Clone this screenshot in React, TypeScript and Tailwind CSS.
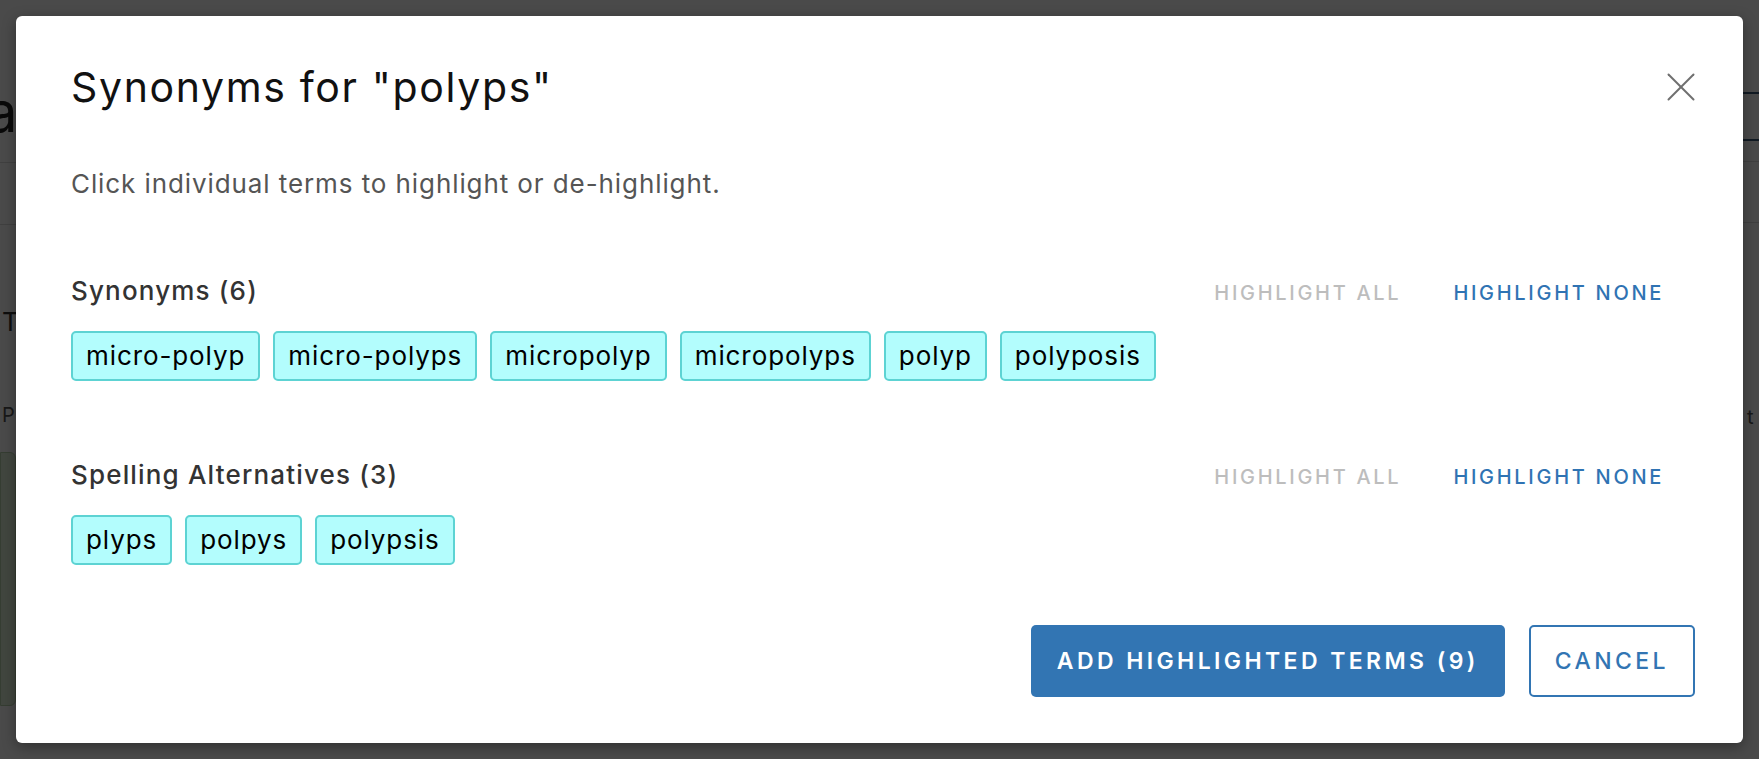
import { useState } from "react";

const groups = [
  {
    label: "Synonyms",
    terms: ["micro-polyp", "micro-polyps", "micropolyp", "micropolyps", "polyp", "polyposis"],
  },
  {
    label: "Spelling Alternatives",
    terms: ["plyps", "polpys", "polypsis"],
  },
];

function CloseIcon() {
  return (
    <svg width="28" height="28" viewBox="0 0 28 28" fill="none" stroke="#6f6f6f" strokeWidth="2" strokeLinecap="round">
      <path d="M1.5 1.5L26.5 26.5" />
      <path d="M26.5 1.5L1.5 26.5" />
    </svg>
  );
}

function TermChip({ term, on, onToggle }: { term: string; on: boolean; onToggle: () => void }) {
  return (
    <button
      type="button"
      onClick={onToggle}
      className={`flex h-[50px] items-center rounded-[5px] border-2 px-[13px] text-[26px] leading-none tracking-[0.035em] text-black ${
        on ? "border-[#5dd3d3] bg-[#b3fdfd]" : "border-[#d6d6d6] bg-white"
      }`}
    >
      {term}
    </button>
  );
}

function TermGroup({
  label,
  terms,
  selected,
  setAll,
  toggle,
}: {
  label: string;
  terms: string[];
  selected: Set<string>;
  setAll: (terms: string[], on: boolean) => void;
  toggle: (t: string) => void;
}) {
  return (
    <section>
      <div className="flex items-baseline justify-between">
        <h3 className="text-[26px] leading-[32px] font-medium tracking-[0.045em] text-[#333]">
          {label} ({terms.length})
        </h3>
        <div className="flex items-baseline gap-[52px] pr-[31px]">
          <button
            type="button"
            onClick={() => setAll(terms, true)}
            className="text-[20px] font-medium tracking-[0.135em] text-[#bdbdbd]"
          >
            HIGHLIGHT ALL
          </button>
          <button
            type="button"
            onClick={() => setAll(terms, false)}
            className="text-[20px] font-medium tracking-[0.135em] text-[#2f73b3]"
          >
            HIGHLIGHT NONE
          </button>
        </div>
      </div>
      <div className="mt-[23px] flex flex-wrap gap-[13px]">
        {terms.map((t) => (
          <TermChip key={t} term={t} on={selected.has(t)} onToggle={() => toggle(t)} />
        ))}
      </div>
    </section>
  );
}

// faint page behind the overlay, only its edges show
function BackPage() {
  return (
    <div className="flex h-full w-full bg-white">
      <div className="flex w-[16px] flex-col overflow-hidden">
        <div className="mt-[84px] -ml-[14px] text-[56px] leading-none text-[#222]">a</div>
        <div className="mt-[22px] border-t border-[#ddd]" />
        <div className="mt-[61px] border-t border-[#ddd]" />
        <div className="mt-[84px] pl-[2px] text-[26px] leading-none text-[#333]">T</div>
        <div className="mt-[70px] pl-[2px] text-[20px] leading-none text-[#555]">P</div>
        <div className="mt-[27px] h-[254px] rounded-r-[6px] border border-[#b6d2ac] bg-[#dff0d8]" />
      </div>
      <div className="flex-1" />
      <div className="flex w-[16px] flex-col overflow-hidden">
        <div className="mt-[92px] border-t-2 border-[#3c5a78]" />
        <div className="mt-[45px] border-t-2 border-[#3c5a78]" />
        <div className="mt-[20px] border-t border-[#ddd]" />
        <div className="mt-[60px] border-t border-[#ddd]" />
        <div className="mt-[184px] pl-[4px] text-[20px] leading-none text-[#555]">t</div>
      </div>
    </div>
  );
}

export default function App() {
  const [selected, setSelected] = useState<Set<string>>(
    () => new Set(groups.flatMap((g) => g.terms)),
  );

  function toggle(t: string) {
    setSelected((prev) => {
      const next = new Set(prev);
      if (next.has(t)) next.delete(t);
      else next.add(t);
      return next;
    });
  }

  function setAll(terms: string[], on: boolean) {
    setSelected((prev) => {
      const next = new Set(prev);
      terms.forEach((t) => (on ? next.add(t) : next.delete(t)));
      return next;
    });
  }

  return (
    <div className="relative h-[759px] w-full overflow-hidden font-['Inter',sans-serif]">
      <BackPage />
      <div className="absolute inset-0 flex bg-black/[0.71] p-[16px]">
        <div className="flex flex-1 flex-col rounded-[6px] bg-white pt-[51px] pr-[48px] pb-[47px] pl-[55px] shadow-[0_4px_14px_rgba(0,0,0,0.35)]">
          <div className="flex items-center justify-between">
            <h2 className="text-[41px] leading-[40px] font-normal tracking-[0.04em] text-[#111]">
              Synonyms for "polyps"
            </h2>
            <button type="button" aria-label="Close" className="flex">
              <CloseIcon />
            </button>
          </div>

          <p className="mt-[61px] text-[26px] leading-[32px] tracking-[0.035em] text-[#555]">
            Click individual terms to highlight or de-highlight.
          </p>

          <div className="mt-[75px] flex flex-col gap-[78px]">
            {groups.map((g) => (
              <TermGroup
                key={g.label}
                label={g.label}
                terms={g.terms}
                selected={selected}
                setAll={setAll}
                toggle={toggle}
              />
            ))}
          </div>

          <div className="mt-[60px] flex justify-end gap-[24px]">
            <button
              type="button"
              className="h-[72px] rounded-[5px] bg-[#3275b3] px-[26px] text-[23px] font-semibold tracking-[0.148em] text-white"
            >
              ADD HIGHLIGHTED TERMS ({selected.size})
            </button>
            <button
              type="button"
              className="h-[72px] rounded-[5px] border-2 border-[#3275b3] bg-white px-[24px] text-[23px] font-medium tracking-[0.148em] text-[#3275b3]"
            >
              CANCEL
            </button>
          </div>
        </div>
      </div>
    </div>
  );
}
